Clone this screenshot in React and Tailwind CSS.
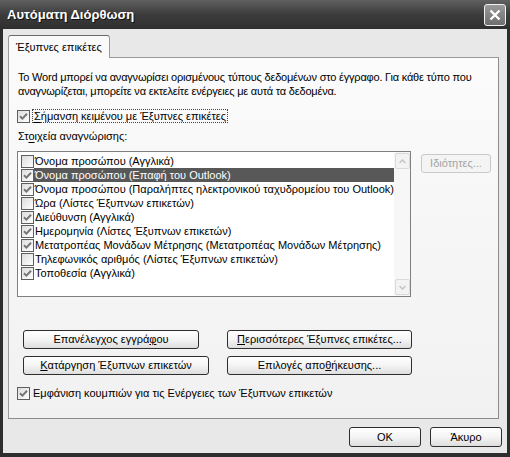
import React from 'react'

const FONT = { fontFamily: '"Liberation Sans", Arial, sans-serif' }

function Check({ checked }) {
  return (
    <span className="w-[13px] h-[13px] shrink-0 border border-[#5e5e5e] bg-gradient-to-br from-[#dcdcdc] to-white flex items-center justify-center">
      {checked && (
        <svg width="9" height="9" viewBox="0 0 9 9">
          <path d="M1 4.2 L3.4 6.6 L8 1.8" fill="none" stroke="#757575" strokeWidth="2" />
        </svg>
      )}
    </span>
  )
}

function Btn({ children, className = '', disabled }) {
  return (
    <div
      className={
        'h-[19px] rounded-[3px] border flex items-center justify-center text-[11px] leading-none ' +
        (disabled
          ? 'border-[#c9c9c9] bg-[#f4f4f4] text-[#a3a3a3] '
          : 'border-[#2e2e2e] bg-gradient-to-b from-white via-[#f4f4f4] to-[#dedede] text-black ') +
        className
      }
    >
      {children}
    </div>
  )
}

const ITEMS = [
  { label: 'Όνομα προσώπου (Αγγλικά)', checked: false },
  { label: 'Όνομα προσώπου (Επαφή του Outlook)', checked: true, selected: true },
  { label: 'Όνομα προσώπου (Παραλήπτες ηλεκτρονικού ταχυδρομείου του Outlook)', checked: true },
  { label: 'Ώρα (Λίστες Έξυπνων επικετών)', checked: false },
  { label: 'Διεύθυνση (Αγγλικά)', checked: true },
  { label: 'Ημερομηνία (Λίστες Έξυπνων επικετών)', checked: true },
  { label: 'Μετατροπέας Μονάδων Μέτρησης (Μετατροπέας Μονάδων Μέτρησης)', checked: true },
  { label: 'Τηλεφωνικός αριθμός (Λίστες Έξυπνων επικετών)', checked: false },
  { label: 'Τοποθεσία (Αγγλικά)', checked: true },
]

function ScrollArrow({ up }) {
  return (
    <div className="w-[15px] h-[16px] rounded-[2px] border border-[#dadada] bg-[#f3f3f3] flex items-center justify-center">
      <svg width="7" height="5" viewBox="0 0 7 5">
        <path d={up ? 'M0.5 4 L3.5 1 L6.5 4' : 'M0.5 1 L3.5 4 L6.5 1'} fill="none" stroke="#c4c4c4" strokeWidth="1.5" />
      </svg>
    </div>
  )
}

export default function App() {
  return (
    <div className="w-[510px] h-[457px] bg-[#2d2d2d] flex flex-col overflow-hidden text-[11px] text-black" style={FONT}>
      {/* title bar */}
      <div className="h-[29px] shrink-0 bg-gradient-to-b from-[#606060] via-[#3c3c3c] to-[#2f2f2f] flex items-center justify-between pl-[7px] pr-[4px]">
        <span className="text-white font-bold text-[13px] [text-shadow:1px_1px_0_#111]">Αυτόματη Διόρθωση</span>
        <div className="w-[22px] h-[22px] rounded-[3px] border border-[#f2f2f2] bg-gradient-to-b from-[#9a9a9a] to-[#6e6e6e] flex items-center justify-center">
          <svg width="12" height="12" viewBox="0 0 12 12">
            <path d="M1.5 1.5 L10.5 10.5 M10.5 1.5 L1.5 10.5" stroke="white" strokeWidth="2.4" />
          </svg>
        </div>
      </div>

      {/* body */}
      <div className="flex-1 mx-[3px] mb-[4px] bg-[#e8e8e8] flex flex-col pt-[6px]">
        {/* tab strip */}
        <div className="h-[22px] flex pl-[5px] relative z-10">
          <div className="w-[102px] h-[23px] rounded-t-[3px] border border-b-0 border-[#9a9a9a] border-t-[#6a6a6a] bg-[#fafafa] flex items-center pl-[7px] pt-[1px]">
            Έξυπνες επικέτες
          </div>
        </div>

        {/* tab panel */}
        <div className="ml-[5px] w-[491px] h-[362px] border border-[#9a9a9a] border-b-[#8c8c8c] border-r-[#8c8c8c] bg-gradient-to-b from-[#fbfbfb] to-[#f1f1f1] pl-[8px] pt-[12px] flex flex-col">
          <p className="ml-[1px] leading-[14px] w-[478px] tracking-[-0.2px]">
            Το Word μπορεί να αναγνωρίσει ορισμένους τύπους δεδομένων στο έγγραφο. Για κάθε τύπο που αναγνωρίζεται, μπορείτε να εκτελείτε ενέργειες με αυτά τα δεδομένα.
          </p>

          <div className="mt-[11px] h-[14px] flex items-center gap-[2px]">
            <Check checked />
            <span className="border border-dotted border-[#444] px-[1px] leading-[12px]">
              <u className="underline-offset-2">Σ</u>ήμανση κειμένου με Έξυπνες επικέτες
            </span>
          </div>

          <div className="mt-[6px] ml-[1px] leading-[14px]">
            Στ<u className="underline-offset-2">ο</u>ιχεία αναγνώρισης:
          </div>

          <div className="mt-[8px] flex items-start">
            <div className="w-[394px] h-[146px] border border-[#7f7f7f] bg-white flex">
              <div className="flex-1 pt-[2px] pl-[3px]">
                {ITEMS.map((it) => (
                  <div key={it.label} className="h-[14px] flex items-center">
                    <Check checked={it.checked} />
                    <span
                      className={
                        'h-[14px] flex-1 flex items-center pl-[1px] whitespace-nowrap ' +
                        (it.selected ? 'bg-[#585858] text-white' : '')
                      }
                    >
                      {it.label}
                    </span>
                  </div>
                ))}
              </div>
              <div className="w-[17px] h-full bg-[#f7f7f7] flex flex-col justify-between items-center py-[1px]">
                <ScrollArrow up />
                <ScrollArrow />
              </div>
            </div>
            <Btn disabled className="ml-[10px] mt-[3px] w-[70px]">Ιδιότητες...</Btn>
          </div>

          <div className="mt-[33px] ml-[6px] flex flex-col gap-[7px]">
            <div className="flex">
              <Btn className="w-[176px]">Επανέλεγχος εγγρά<u className="underline-offset-1">φ</u>ου</Btn>
              <Btn className="ml-[28px] w-[185px]"><u className="underline-offset-1">Π</u>ερισσότερες Έξυπνες επικέτες...</Btn>
            </div>
            <div className="flex">
              <Btn className="w-[186px]"><u className="underline-offset-1">Κ</u>ατάργηση Έξυπνων επικετών</Btn>
              <Btn className="ml-[18px] w-[185px]">Επιλογές απο<u className="underline-offset-1">θ</u>ήκευσης...</Btn>
            </div>
          </div>

          <div className="mt-[11px] h-[14px] flex items-center gap-[3px]">
            <Check checked />
            <span>Εμφάνιση κουμπιών για τις Ενέργειες των Έξυπνων επικετών</span>
          </div>
        </div>

        {/* footer buttons */}
        <div className="mt-[8px] flex justify-end gap-[9px] pr-[5px]">
          <Btn className="w-[72px] h-[20px]">OK</Btn>
          <Btn className="w-[72px] h-[20px]">Άκυρο</Btn>
        </div>
      </div>
    </div>
  )
}
